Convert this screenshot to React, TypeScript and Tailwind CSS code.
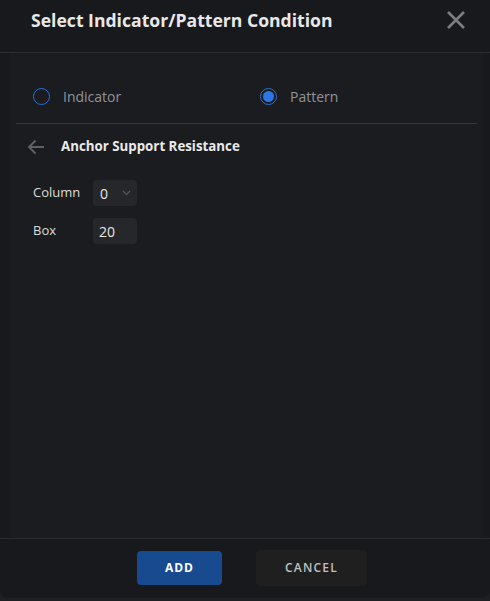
import React, { useState } from "react";

type Mode = "indicator" | "pattern";

function Radio({ checked, label, onClick }: { checked: boolean; label: string; onClick: () => void }) {
  return (
    <button className="flex items-center gap-[13px] text-left" onClick={onClick} type="button">
      <span className="flex h-[17px] w-[17px] items-center justify-center rounded-full border-[1.5px] border-[#2b70d4]">
        {checked && <span className="h-[11px] w-[11px] rounded-full bg-[#2b78e4]" />}
      </span>
      <span className="text-[14px] text-[#8f9399]">{label}</span>
    </button>
  );
}

export default function App() {
  const [mode, setMode] = useState<Mode>("pattern");
  const [column, setColumn] = useState("0");
  const [box, setBox] = useState("20");

  return (
    <div
      className="h-[601px] w-[490px] bg-[#1e1f23]"
      style={{ fontFamily: '"Open Sans", "Noto Sans", sans-serif' }}
    >
      <div className="flex h-[598px] flex-col overflow-hidden rounded-b-[8px] bg-[#18191d]">
        <header className="flex h-[53px] shrink-0 items-center justify-between border-b border-[#2c2d31] pr-[24px] pb-[12px] pl-[31px]">
          <h1 className="text-[17.6px] font-bold text-[#e8e8e8]">Select Indicator/Pattern Condition</h1>
          <button className="text-[#7c7d80]" type="button" aria-label="Close">
            <svg width="20" height="20" viewBox="0 0 20 20" fill="none" stroke="currentColor" strokeWidth="2.6">
              <path d="M2 2 L18 18 M18 2 L2 18" />
            </svg>
          </button>
        </header>

        <div className="mr-[7px] ml-[10px] flex flex-1 flex-col rounded-b-[4px] bg-[#1b1c20]">
          <div className="mx-[6px] flex h-[71px] items-start border-b border-[#36373b] pt-[33px] pl-[17px]">
            <div className="w-[227px]">
              <Radio checked={mode === "indicator"} label="Indicator" onClick={() => setMode("indicator")} />
            </div>
            <Radio checked={mode === "pattern"} label="Pattern" onClick={() => setMode("pattern")} />
          </div>

          <div className="flex h-[45px] items-center gap-[15px] pt-[1px] pl-[16px]">
            <svg width="20" height="20" viewBox="0 0 20 20" fill="none" stroke="#5f6165" strokeWidth="1.8">
              <path d="M18 10 H3 M9.5 3.5 L3 10 L9.5 16.5" />
            </svg>
            <span className="text-[13.3px] font-bold text-[#eaeaea]">Anchor Support Resistance</span>
          </div>

          <div className="grid grid-cols-[60px_44px] items-center gap-y-[12px] pt-[11px] pl-[23px] text-[13px] text-[#dcdcdc]">
            <label htmlFor="col">Column</label>
            <div className="relative h-[26px] rounded-[4px] bg-[#26272b]">
              <select
                id="col"
                className="h-full w-full appearance-none bg-transparent pl-[7px] text-[14px] text-[#e6e6e6] outline-none"
                value={column}
                onChange={(e) => setColumn(e.target.value)}
              >
                <option value="0">0</option>
                <option value="1">1</option>
                <option value="2">2</option>
              </select>
              <svg
                className="pointer-events-none absolute top-[10px] right-[6px]"
                width="9"
                height="6"
                viewBox="0 0 9 6"
                fill="none"
                stroke="#55575b"
                strokeWidth="1.2"
              >
                <path d="M1 1 L4.5 4.5 L8 1" />
              </svg>
            </div>
            <label htmlFor="box">Box</label>
            <input
              id="box"
              className="h-[26px] w-[44px] rounded-[4px] bg-[#26272b] pl-[6px] text-[14px] text-[#e6e6e6] outline-none"
              value={box}
              onChange={(e) => setBox(e.target.value)}
            />
          </div>
        </div>

        <footer className="flex h-[60px] shrink-0 items-center justify-center gap-[34px] border-t border-[#2a2b2f] pb-[2px] pl-[14px]">
          <button
            className="h-[34px] w-[85px] rounded-[4px] bg-[#174a8f] text-[12px] font-bold tracking-[0.08em] text-white"
            type="button"
          >
            ADD
          </button>
          <button
            className="h-[36px] w-[111px] rounded-[4px] bg-[#1f1f20] text-[12px] font-semibold tracking-[0.1em] text-[#bfc0c2]"
            type="button"
          >
            CANCEL
          </button>
        </footer>
      </div>
    </div>
  );
}
